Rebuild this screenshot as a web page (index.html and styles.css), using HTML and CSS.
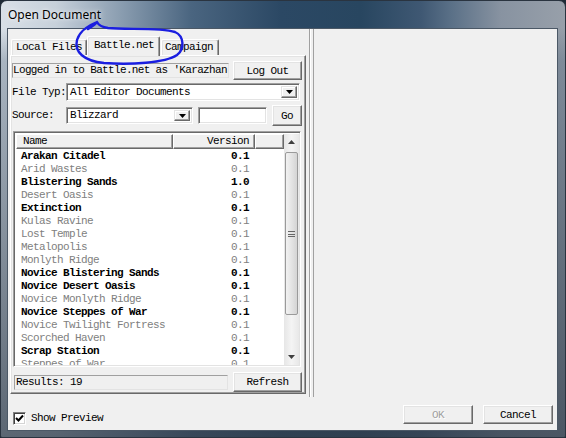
FILE: index.html
```html
<!DOCTYPE html>
<html>
<head>
<meta charset="utf-8">
<title>Open Document</title>
<link rel="stylesheet" href="styles.css">
</head>
<body>
<div class="window">
  <div class="titlebar"><span class="title">Open Document</span></div>
  <div class="client">
    <div class="main">
      <div class="leftpane">
        <div class="tabs">
          <div class="tabstrip">
            <div class="tab t1">Local Files</div>
            <div class="tab active t2">Battle.net</div>
            <div class="tab t3">Campaign</div>
          </div>
          <div class="page">
            <div class="row r1">
              <div class="field login">Logged in to Battle.net as 'Karazhan</div>
              <div class="btn w69">Log Out</div>
            </div>
            <div class="row r2">
              <div class="label">File Typ:</div>
              <div class="combo c-type"><span class="cv">All Editor Documents</span><span class="drop"><svg width="7" height="4" viewBox="0 0 7 4"><polygon points="0,0 7,0 3.5,4" fill="#000"/></svg></span></div>
            </div>
            <div class="row r3">
              <div class="label">Source:</div>
              <div class="combo c-src"><span class="cv">Blizzard</span><span class="drop"><svg width="7" height="4" viewBox="0 0 7 4"><polygon points="0,0 7,0 3.5,4" fill="#000"/></svg></span></div>
              <div class="edit"></div>
              <div class="btn go">Go</div>
            </div>
            <div class="list">
              <div class="listbody">
                <div class="header">
                  <div class="hcell hname">Name</div>
                  <div class="hcell hver">Version</div>
                  <div class="hcell hblank"></div>
                </div>
                <div class="rows">
                  <div class="item on"><span class="nm">Arakan Citadel</span><span class="vr">0.1</span></div>
                  <div class="item"><span class="nm">Arid Wastes</span><span class="vr">0.1</span></div>
                  <div class="item on"><span class="nm">Blistering Sands</span><span class="vr">1.0</span></div>
                  <div class="item"><span class="nm">Desert Oasis</span><span class="vr">0.1</span></div>
                  <div class="item on"><span class="nm">Extinction</span><span class="vr">0.1</span></div>
                  <div class="item"><span class="nm">Kulas Ravine</span><span class="vr">0.1</span></div>
                  <div class="item"><span class="nm">Lost Temple</span><span class="vr">0.1</span></div>
                  <div class="item"><span class="nm">Metalopolis</span><span class="vr">0.1</span></div>
                  <div class="item"><span class="nm">Monlyth Ridge</span><span class="vr">0.1</span></div>
                  <div class="item on"><span class="nm">Novice Blistering Sands</span><span class="vr">0.1</span></div>
                  <div class="item on"><span class="nm">Novice Desert Oasis</span><span class="vr">0.1</span></div>
                  <div class="item"><span class="nm">Novice Monlyth Ridge</span><span class="vr">0.1</span></div>
                  <div class="item on"><span class="nm">Novice Steppes of War</span><span class="vr">0.1</span></div>
                  <div class="item"><span class="nm">Novice Twilight Fortress</span><span class="vr">0.1</span></div>
                  <div class="item"><span class="nm">Scorched Haven</span><span class="vr">0.1</span></div>
                  <div class="item on"><span class="nm">Scrap Station</span><span class="vr">0.1</span></div>
                  <div class="item"><span class="nm">Steppes of War</span><span class="vr">0.1</span></div>
                </div>
              </div>
              <div class="vscroll">
                <div class="sarrow up"><svg width="7" height="4" viewBox="0 0 7 4"><polygon points="0,4 7,4 3.5,0" fill="#404040"/></svg></div>
                <div class="track">
                  <div class="thumb"><span class="grip"></span></div>
                </div>
                <div class="sarrow down"><svg width="7" height="4" viewBox="0 0 7 4"><polygon points="0,0 7,0 3.5,4" fill="#404040"/></svg></div>
              </div>
            </div>
            <div class="row r5">
              <div class="field results">Results: 19</div>
              <div class="btn w69">Refresh</div>
            </div>
          </div>
        </div>
        <div class="edge"></div>
      </div>
      <div class="rightpane"></div>
    </div>
    <div class="bottom">
      <div class="check">
        <span class="box"><svg width="9" height="9" viewBox="0 0 9 9"><path d="M1 4 L3.5 6.5 L8 1.5" fill="none" stroke="#000" stroke-width="2"/></svg></span>
        <span class="clabel">Show Preview</span>
      </div>
      <div class="btn w70 disabled ok">OK</div>
      <div class="btn w70 cancel">Cancel</div>
    </div>
  </div>
  <svg class="annot" width="566" height="438" viewBox="0 0 566 438">
    <path d="M97 22 C 92 24, 80 30, 77 40 C 74 52, 84 61, 104 63 C 130 65, 165 63, 177 55 C 185 49, 184 36, 175 32 C 160 27, 125 30, 108 28 C 101 27, 98 24, 97 22 C 95 25, 91 27, 88 29" fill="none" stroke="#1a1ee0" stroke-width="2.4" stroke-linecap="round" stroke-linejoin="round"/>
  </svg>
</div>
</body>
</html>
```
FILE: styles.css
```css
* { box-sizing: border-box; margin: 0; padding: 0; }
html, body { width: 566px; height: 438px; overflow: hidden; background: #1e2a36; }
body {
  font-family: "Liberation Mono", "DejaVu Sans Mono", monospace;
  font-size: 11px;
  letter-spacing: -0.6px;
  color: #000;
}
.window {
  position: relative;
  width: 566px;
  height: 438px;
  border: 1px solid #2a3440;
  border-radius: 7px 7px 2px 2px;
  background:
    linear-gradient(180deg, rgba(0,0,0,0) 27px, rgba(80,100,122,0.35) 60px, rgba(50,62,76,0.75) 100%),
    linear-gradient(90deg, #d9e0e7 0, #c6d0da 55px, #8a9db0 120px, #4a6580 190px, #2b4864 280px, #284660 360px, #3f5873 420px, #5a7087 450px, #8893a1 500px, #98a0aa 566px);
  display: flex;
  flex-direction: column;
  padding: 0 7px 6px 6px;
}
.titlebar {
  height: 27px;
  display: flex;
  align-items: center;
  padding-left: 1px;
}
.title {
  font-family: "Noto Sans", "Liberation Sans", sans-serif;
  font-size: 12px;
  letter-spacing: 0;
  color: #000;
  text-shadow: 0 0 6px rgba(255,255,255,0.8), 0 0 3px rgba(255,255,255,0.6);
}
.client {
  flex: 1;
  border: 1px solid #4b5866;
  background: #f0f0f0;
  display: flex;
  flex-direction: column;
}
.main { height: 368px; display: flex; }
.leftpane {
  width: 306px;
  display: flex;
  border-right: 1px solid #a0a0a0;
}
.tabs {
  margin-left: 2px;
  margin-top: 7px;
  width: 296px;
  height: 358px;
  display: flex;
  flex-direction: column;
}
.edge {
  margin-left: 3px;
  width: 2px;
  border-left: 1px solid #a0a0a0;
  border-right: 1px solid #fff;
}
.rightpane { flex: 1; }

.tabstrip { height: 19px; display: flex; align-items: flex-end; padding-left: 1px; position: relative; z-index: 2; }
.tab {
  height: 16px;
  line-height: 14px;
  background: #f0f0f0;
  border-top: 1px solid #fff;
  border-left: 1px solid #fff;
  border-right: 1px solid #696969;
  box-shadow: inset -1px 0 #a0a0a0, inset 1px 1px #e3e3e3;
  border-radius: 2px 2px 0 0;
  white-space: nowrap;
  overflow: hidden;
}
.t1 { width: 76px; padding-left: 4px; }
.t2 { width: 73px; padding-left: 6px; }
.t3 { width: 58px; padding-left: 3px; margin-left: 1px; }
.tab.active {
  height: 20px;
  margin-bottom: -1px;
  line-height: 16px;
  border-bottom: none;
}
.page {
  height: 339px;
  border-top: 1px solid #fff;
  border-left: 1px solid #fff;
  border-right: 1px solid #696969;
  border-bottom: 1px solid #696969;
  box-shadow: inset -1px -1px #a0a0a0, inset 1px 1px #e3e3e3;
  padding: 0 2px 0 1px;
  display: flex;
  flex-direction: column;
  position: relative;
  z-index: 1;
}
.row { display: flex; align-items: center; white-space: nowrap; }
.r1 { margin-top: 5px; height: 19px; gap: 4px; }
.r2 { margin-top: 3px; height: 18px; }
.r3 { margin-top: 4px; height: 21px; }
.r5 { margin-top: 5px; height: 20px; gap: 5px; padding-left: 2px; }

.btn {
  background: #f0f0f0;
  border-top: 1px solid #fff;
  border-left: 1px solid #fff;
  border-right: 1px solid #696969;
  border-bottom: 1px solid #696969;
  box-shadow: inset -1px -1px #a0a0a0, inset 1px 1px #e3e3e3;
  display: flex;
  align-items: center;
  justify-content: center;
  white-space: nowrap;
}
.w69 { width: 69px; height: 19px; }
.r5 .w69 { height: 20px; }
.w70 { width: 70px; height: 19px; }
.go { width: 30px; height: 21px; margin-left: 5px; }
.disabled { color: #a0a0a0; text-shadow: 1px 1px #fff; }

.field {
  height: 15px;
  line-height: 13px;
  border: 1px solid #a0a0a0;
  border-right-color: #e3e3e3;
  border-bottom-color: #e3e3e3;
  background: #f0f0f0;
  padding-left: 1px;
  overflow: hidden;
  white-space: nowrap;
}
.login { width: 217px; padding-left: 0; letter-spacing: -0.66px; }
.results { width: 214px; }

.label { width: 54px; overflow: hidden; white-space: nowrap; line-height: 13px; }
.combo {
  height: 18px;
  background: #fff;
  border-top: 1px solid #a0a0a0;
  border-left: 1px solid #a0a0a0;
  border-right: 1px solid #fff;
  border-bottom: 1px solid #fff;
  box-shadow: inset 1px 1px #696969, inset -1px -1px #e3e3e3;
  display: flex;
  align-items: center;
  padding: 2px;
}
.c-type { width: 234px; }
.c-src { width: 127px; height: 17px; }
.cv { flex: 1; padding-left: 1px; line-height: 13px; }
.drop {
  width: 16px;
  height: 100%;
  background: #f0f0f0;
  border-top: 1px solid #e3e3e3;
  border-left: 1px solid #e3e3e3;
  border-right: 1px solid #696969;
  border-bottom: 1px solid #696969;
  box-shadow: inset -1px -1px #a0a0a0, inset 1px 1px #fff;
  display: flex;
  align-items: center;
  justify-content: center;
}
.edit {
  width: 69px;
  height: 17px;
  margin-left: 5px;
  background: #fff;
  border-top: 1px solid #a0a0a0;
  border-left: 1px solid #a0a0a0;
  border-right: 1px solid #fff;
  border-bottom: 1px solid #fff;
  box-shadow: inset 1px 1px #696969, inset -1px -1px #e3e3e3;
}

.list {
  margin-top: 5px;
  margin-left: 1px;
  width: 288px;
  height: 236px;
  background: #fff;
  border-top: 1px solid #a0a0a0;
  border-left: 1px solid #a0a0a0;
  border-right: 1px solid #fff;
  border-bottom: 1px solid #fff;
  box-shadow: inset 1px 1px #696969, inset -1px -1px #e3e3e3;
  padding: 2px 1px 1px 2px;
  display: flex;
}
.listbody { flex: 1; display: flex; flex-direction: column; overflow: hidden; }
.header { height: 15px; display: flex; flex: none; }
.hcell {
  height: 15px;
  line-height: 13px;
  background: #f0f0f0;
  border-top: 1px solid #fff;
  border-left: 1px solid #fff;
  border-right: 1px solid #696969;
  border-bottom: 1px solid #696969;
  box-shadow: inset -1px -1px #a0a0a0;
}
.hname { width: 157px; padding-left: 6px; }
.hver { width: 82px; text-align: right; padding-right: 5px; }
.hblank { flex: 1; }
.rows { flex: 1; overflow: hidden; padding-top: 1px; }
.item { height: 13px; line-height: 13px; display: flex; color: #808080; white-space: nowrap; flex: none; }
.item.on { color: #000; font-weight: bold; }
.nm { width: 157px; padding-left: 5px; overflow: hidden; }
.vr { width: 82px; text-align: right; padding-right: 6px; }

.vscroll {
  width: 15px;
  display: flex;
  flex-direction: column;
  background: linear-gradient(90deg, #e6e6e6, #f4f4f4 50%, #e8e8e8);
}
.sarrow { height: 16px; display: flex; align-items: center; justify-content: center; }
.track { flex: 1; padding: 2px 1px; }
.thumb {
  height: 163px;
  border: 1px solid #9a9a9a;
  border-radius: 2px;
  background: linear-gradient(90deg, #f2f2f2, #e4e4e4 50%, #d4d4d4);
  display: flex;
  align-items: center;
  justify-content: center;
}
.grip {
  width: 7px;
  height: 6px;
  border-top: 1px solid #666;
  border-bottom: 1px solid #666;
  background: linear-gradient(180deg, transparent 2px, #666 2px, #666 3px, transparent 3px);
}

.bottom { flex: 1; display: flex; align-items: flex-start; padding-right: 4px; }
.check { display: flex; align-items: center; margin-top: 15px; margin-left: 5px; }
.box {
  width: 13px;
  height: 13px;
  background: #fff;
  border-top: 1px solid #808080;
  border-left: 1px solid #808080;
  border-right: 1px solid #fff;
  border-bottom: 1px solid #fff;
  box-shadow: inset 1px 1px #404040, inset -1px -1px #d4d4d4;
  display: flex;
  align-items: center;
  justify-content: center;
}
.clabel { margin-left: 5px; line-height: 13px; }
.ok { margin-left: auto; margin-top: 8px; margin-right: 10px; }
.cancel { margin-top: 8px; }

.annot { position: absolute; left: -1px; top: -1px; pointer-events: none; z-index: 5; }
```
